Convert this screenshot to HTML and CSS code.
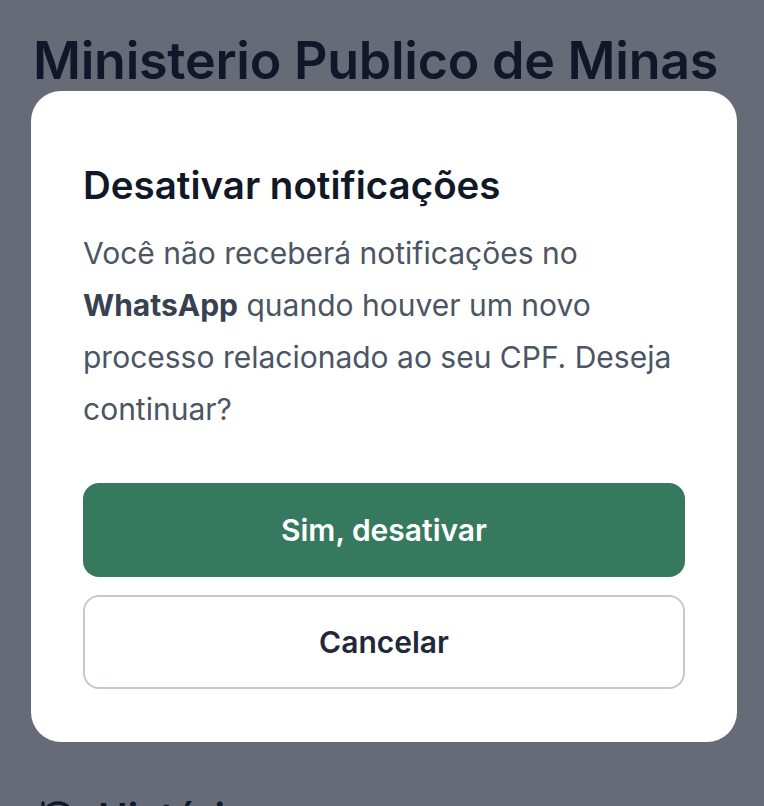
FILE: index.html
```html
<!DOCTYPE html>
<html lang="pt-BR">
<head>
    <meta charset="UTF-8">
    <meta name="viewport" content="width=device-width, initial-scale=1.0">
    <title>Notificações</title>
    <link rel="stylesheet" href="styles.css">
</head>
<body>
    <header class="cabecalho">
        <h1>Ministerio Publico de Minas</h1>
    </header>

    <section class="historico">
        <svg class="historico-icone" viewBox="0 0 24 24" width="40" height="40" fill="none" stroke="currentColor" stroke-width="2" stroke-linecap="round" stroke-linejoin="round">
            <path d="M3 12a9 9 0 1 0 3-6.7L3 8"/>
            <path d="M3 3v5h5"/>
            <path d="M12 7v5l4 2"/>
        </svg>
        <h2>Histórico</h2>
    </section>

    <div class="fundo-modal">
        <section class="modal">
            <h2 class="modal-titulo">Desativar notificações</h2>
            <p class="modal-texto">Você não receberá notificações no <strong>WhatsApp</strong> quando houver um novo processo relacionado ao seu CPF. Deseja continuar?</p>
            <div class="modal-acoes">
                <button class="btn btn-primario">Sim, desativar</button>
                <button class="btn btn-secundario">Cancelar</button>
            </div>
        </section>
    </div>
</body>
</html>
```

FILE: styles.css
```css
body {
    font-family: Inter, "Noto Sans", sans-serif;
    margin: 0;
    padding: 0;
    background-color: #ffffff;
    color: #111827;
}

.cabecalho {
    padding: 29px 33px 0;
}

.cabecalho h1 {
    margin: 0;
    font-size: 52px;
    font-weight: 600;
    letter-spacing: -0.25px;
    line-height: 64px;
    color: #111827;
}

.historico {
    display: flex;
    align-items: center;
    gap: 20px;
    padding: 700px 38px 0;
}

.historico h2 {
    margin: 0;
    font-size: 40px;
    font-weight: 600;
}

.fundo-modal {
    position: fixed;
    inset: 0;
    background-color: rgba(17, 24, 44, 0.64);
    padding: 91px 27px 0 31px;
}

.modal {
    background-color: #fff;
    border-radius: 30px;
    padding: 70px 52px 53px;
}

.modal-titulo {
    margin: 0;
    font-size: 38.5px;
    font-weight: 600;
    line-height: 48px;
    color: #111827;
}

.modal-texto {
    margin: 18px 0 0;
    font-size: 30px;
    line-height: 52px;
    color: #4b5563;
}

.modal-texto strong {
    color: #374151;
    font-weight: 700;
}

.modal-acoes {
    display: flex;
    flex-direction: column;
    gap: 18px;
    margin-top: 48px;
}

.btn {
    height: 94px;
    border-radius: 16px;
    font-family: Inter, "Noto Sans", sans-serif;
    font-size: 30px;
    font-weight: 600;
    cursor: pointer;
}

.btn-primario {
    background-color: #357a5e;
    border: none;
    color: #ffffff;
}

.btn-secundario {
    background-color: #ffffff;
    border: 2px solid #c3c9d2;
    color: #1f2937;
}
```
